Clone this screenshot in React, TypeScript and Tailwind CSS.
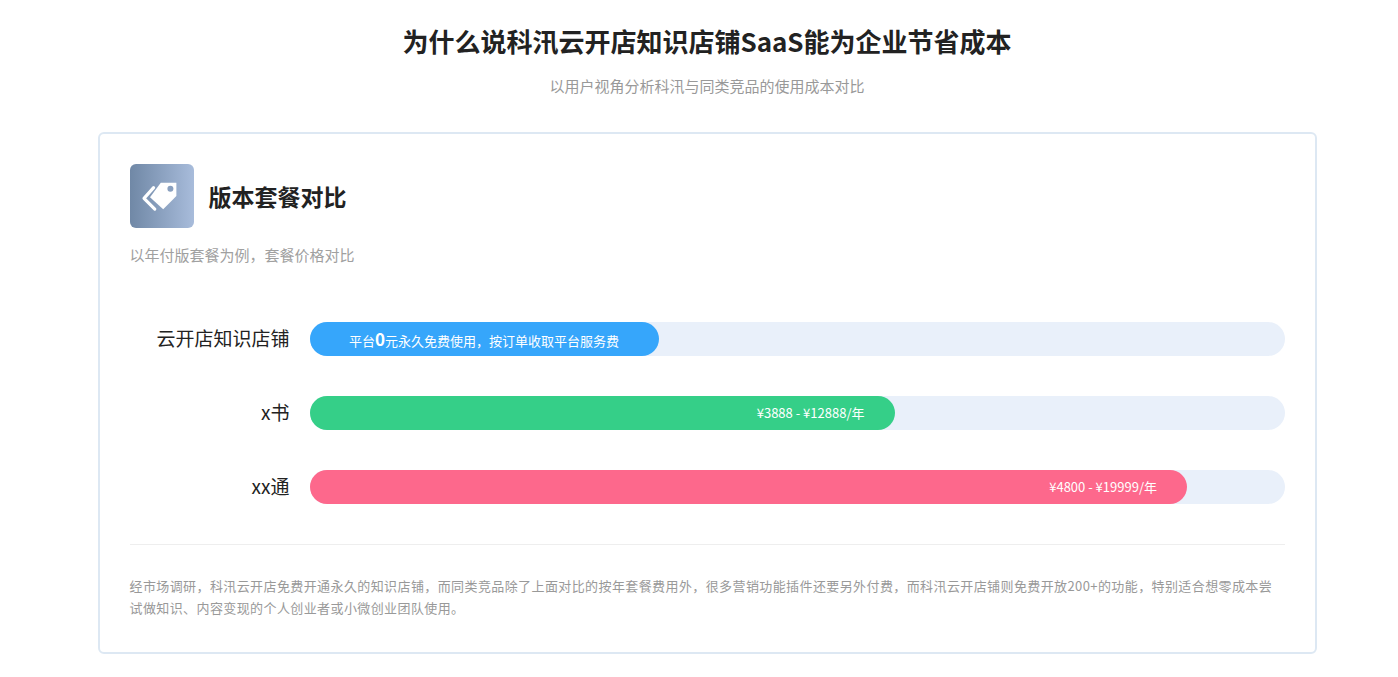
import React from "react";

const rows = [
  { label: "云开店知识店铺", pct: 35.8, color: "bg-[#36a6fb]", center: true },
  { label: "x书", pct: 60, color: "bg-[#35cf88]", text: "¥3888 - ¥12888/年" },
  { label: "xx通", pct: 90, color: "bg-[#fd688c]", text: "¥4800 - ¥19999/年" },
];

export default function App() {
  return (
    <div className="w-[1398px] h-[677px] bg-white flex flex-col items-center pl-[16px]" style={{ fontFamily: '"Noto Sans CJK SC", "Noto Sans", sans-serif' }}>
      <h1 className="mt-[22px] text-[26px] leading-[38px] font-bold text-[#222]">为什么说科汛云开店知识店铺SaaS能为企业节省成本</h1>
      <p className="mt-[15px] text-[15px] leading-[22px] text-[#999]">以用户视角分析科汛与同类竞品的使用成本对比</p>
      <div className="mt-[35px] w-[1219px] h-[522px] border-2 border-[#dde8f3] rounded-[6px] px-[30px] pt-[30px]">
        <div className="flex items-center gap-[15px]">
          <div className="w-[64px] h-[64px] rounded-[6px] bg-gradient-to-r from-[#7088a6] to-[#a8bcdb] flex items-center justify-center">
            <svg width="48" height="48" viewBox="0 0 40 40" fill="none" stroke="white" strokeWidth="2.6" strokeLinejoin="round" strokeLinecap="round">
              <path d="M19 9 H32 V20 L21 31 L10 21 Z" fill="white" stroke="none" />
              <path d="M13 13 L5 22 L14 31" />
              <circle cx="27" cy="14" r="2.5" fill="#8aa0bf" stroke="none" />
            </svg>
          </div>
          <div className="text-[23px] font-bold text-[#222]">版本套餐对比</div>
        </div>
        <p className="mt-[16px] text-[15px] text-[#a0a0a0]">以年付版套餐为例，套餐价格对比</p>
        <div className="mt-[55px] flex flex-col gap-[40px]">
          {rows.map((r) => (
            <div key={r.label} className="flex items-center">
              <div className="w-[180px] pr-[20px] text-right text-[19px] text-[#222]">{r.label}</div>
              <div className="flex-1 h-[34px] rounded-full bg-[#e9f0fa]">
                <div className={`h-full rounded-full ${r.color} flex items-center text-white text-[13px] ${r.center ? "justify-center" : "justify-end pr-[30px]"}`} style={{ width: `${r.pct}%` }}>
                  {r.center ? (
                    <span>平台<span className="text-[17px] font-bold">0</span>元永久免费使用，按订单收取平台服务费</span>
                  ) : (
                    r.text
                  )}
                </div>
              </div>
            </div>
          ))}
        </div>
        <div className="mt-[40px] border-t border-[#eee] pt-[30px] text-[13px] leading-[22px] text-[#999] tracking-[0.4px]">
          经市场调研，科汛云开店免费开通永久的知识店铺，而同类竞品除了上面对比的按年套餐费用外，很多营销功能插件还要另外付费，而科汛云开店铺则免费开放200+的功能，特别适合想零成本尝试做知识、内容变现的个人创业者或小微创业团队使用。
        </div>
      </div>
    </div>
  );
}
